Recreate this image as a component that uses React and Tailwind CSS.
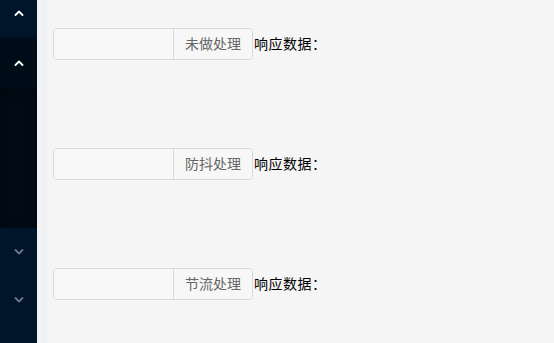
import React from 'react';

const Chevron = ({ up, light }) => (
  <svg width="10" height="6" viewBox="0 0 10 6" fill="none" className={light ? 'text-white' : 'text-[#6b7685]'}>
    <path d={up ? 'M1.5 5L5 1.5L8.5 5' : 'M1.5 1L5 4.5L8.5 1'} stroke="currentColor" strokeWidth="1.8" strokeLinecap="round" strokeLinejoin="round" />
  </svg>
);

const rows = ['未做处理', '防抖处理', '节流处理'];

export default function App() {
  return (
    <div className="flex w-[554px] h-[343px] overflow-hidden" style={{ fontFamily: '"Noto Sans CJK SC", "Noto Sans", sans-serif' }}>
      {/* sider */}
      <div className="w-[37px] shrink-0 flex flex-col bg-[#001529]">
        <div className="h-[37px] flex items-start justify-center pt-[10px]">
          <Chevron up light />
        </div>
        <div className="h-[51px] bg-[#000c17] flex items-center justify-center pt-[1px]">
          <Chevron up light />
        </div>
        <div className="h-[140px] bg-[#000b16] shadow-[inset_0_2px_8px_rgba(0,0,0,0.45)]" />
        <div className="h-[48px] flex items-center justify-center">
          <Chevron />
        </div>
        <div className="h-[48px] flex items-center justify-center">
          <Chevron />
        </div>
      </div>
      {/* main */}
      <div className="flex-1 bg-[#f0f2f6] pl-[10px]">
        <div className="h-full bg-[#f5f5f5] pl-[6px] pt-[28px] flex flex-col gap-[88px]">
          {rows.map((r) => (
            <div key={r} className="flex items-center h-[32px]">
              <div className="flex h-[32px] border border-[#d9d9d9] rounded-[4px] overflow-hidden">
                <div className="w-[119px] bg-[#f8f8f8]" />
                <div className="w-[79px] border-l border-[#d9d9d9] bg-[#f7f7f7] flex items-center justify-center text-[14px] leading-none pb-[3px] text-[#666]">
                  {r}
                </div>
              </div>
              <span className="ml-[1px] text-[14px] leading-none pb-[3px] text-black tracking-[0.5px]">响应数据：</span>
            </div>
          ))}
        </div>
      </div>
    </div>
  );
}
